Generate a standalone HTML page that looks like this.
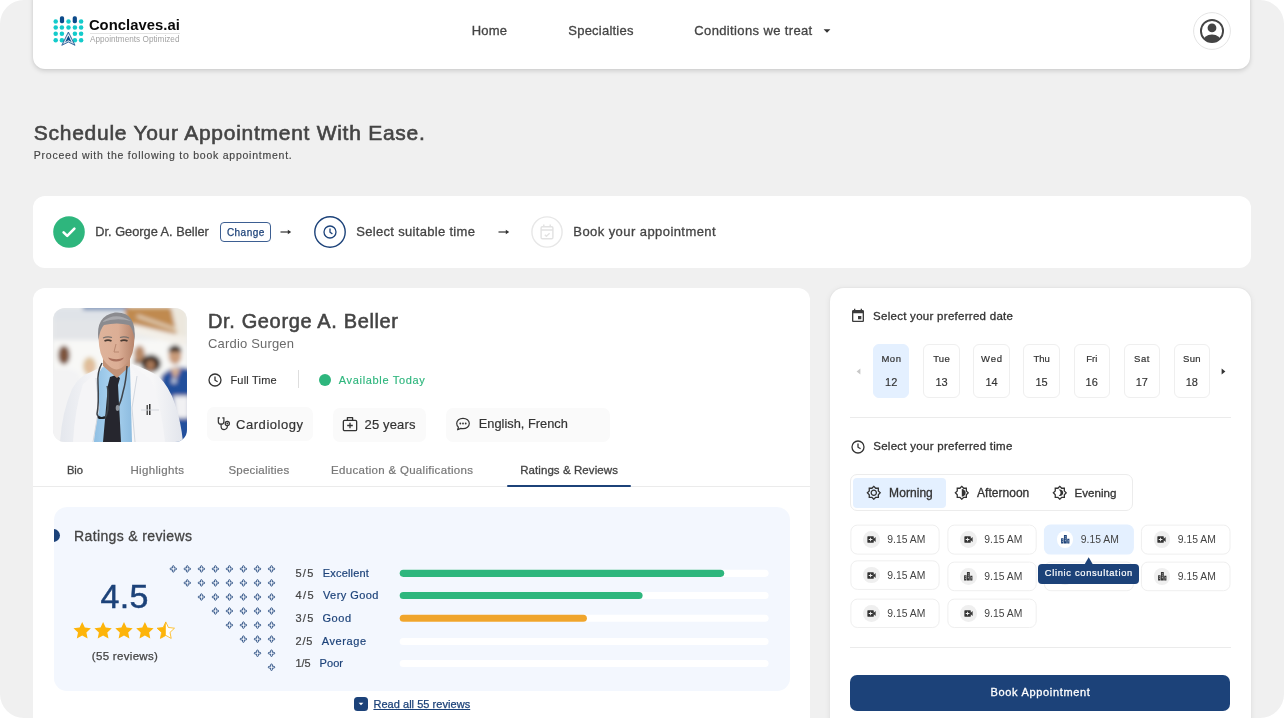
<!DOCTYPE html>
<html lang="en">
<head>
<meta charset="utf-8">
<title>Conclaves.ai - Schedule Your Appointment</title>
<style>
html,body{margin:0;padding:0;background:#fff;}
body{width:1284px;height:718px;overflow:hidden;font-family:"Liberation Sans",sans-serif;}
#page{will-change:transform;position:relative;width:1284px;height:718px;background:#f0f0f0;border-radius:24px;overflow:hidden;}
.abs,.t,.card,.slot,.day,svg.i{position:absolute;}
.t{white-space:pre;line-height:1em;}
.card{background:#fff;}
#nav{left:33.4px;top:-14px;width:1217px;height:83px;border-radius:12px;box-shadow:0 2px 5px rgba(0,0,0,.14),0 0 3px rgba(0,0,0,.05);}
#steps{left:33px;top:196.2px;width:1218px;height:71.6px;border-radius:12px;}
#doc{left:33px;top:288px;width:777px;height:460px;border-radius:12px;}
#book{left:830px;top:287.7px;width:421px;height:460px;border-radius:14px;box-shadow:0 0 0 1px #e6e6e6,0 1px 6px rgba(0,0,0,.08);}
.chip{position:absolute;top:407px;height:34.3px;background:#fafafa;border-radius:7px;}
.hr{position:absolute;height:1px;background:#ebebeb;}
#rbox{position:absolute;left:53.7px;top:506.6px;width:736px;height:184px;border-radius:13px;background:#f3f7fe;overflow:hidden;}
.track{position:absolute;left:400px;width:368px;height:6px;border-radius:3px;background:#fff;}
.track b{display:block;height:6px;border-radius:3px;}
.day{top:344.2px;width:36.4px;height:53.8px;border-radius:6px;box-sizing:border-box;border:1px solid #efefef;background:#fff;}
.day.on{background:#e4f0ff;border-color:#e4f0ff;}
.slot{width:89.4px;}
.slot i{position:absolute;left:12.8px;top:50%;margin-top:-8.3px;width:16.6px;height:16.6px;border-radius:50%;background:#efefef;color:#333;display:flex;align-items:center;justify-content:center;}
.slot.sel i{background:#fff;color:#1c4279;}
</style>
</head>
<body>
<div id="page">

<!-- ======= NAV ======= -->
<div class="card" id="nav"></div>
<svg class="i" style="left:50px;top:12px" width="40" height="38" viewBox="50 12 40 38">
  <g fill="#14cbcb">
    <circle cx="55.7" cy="21.5" r="2.25"/><circle cx="68.5" cy="21.5" r="2.25"/><circle cx="81.1" cy="21.5" r="2.25"/>
    <circle cx="55.7" cy="27.6" r="2.25"/><circle cx="61.9" cy="27.6" r="2.25"/><circle cx="68.5" cy="27.6" r="2.25"/><circle cx="74.9" cy="27.6" r="2.25"/><circle cx="81.1" cy="27.6" r="2.25"/>
    <circle cx="55.7" cy="33.8" r="2.25"/><circle cx="61.9" cy="33.8" r="2.25"/><circle cx="74.9" cy="33.8" r="2.25"/><circle cx="81.1" cy="33.8" r="2.25"/>
    <circle cx="55.7" cy="40.2" r="2.25"/><circle cx="61.9" cy="40.2" r="2.25"/><circle cx="74.9" cy="40.2" r="2.25"/><circle cx="81.1" cy="40.2" r="2.25"/>
  </g>
  <g fill="#0c4a8a">
    <rect x="59.900" y="16.200" width="4.200" height="7" rx="1.700"/><rect x="72.700" y="16.200" width="4.200" height="7" rx="1.700"/>
  </g>
  <path d="M68.400 32 L75 45.300 L68.400 42 L61.800 45.300 Z" fill="#fff" stroke="#0c4a8a" stroke-width=".8" stroke-linejoin="round"/><path d="M68.400 33.300 L73.600 43.900 L68.400 41.200 L63.200 43.900 Z" fill="none" stroke="#0c4a8a" stroke-width=".4" stroke-dasharray=".8 .6"/>
  <path d="M68.400 35.600 L71.700 42.200 L68.400 40.300 L65.100 42.200 Z" fill="#0c4a8a"/>
</svg>
<div class="abs" style="left:90px;top:32.6px;width:90px;height:1px;background:#e3e3e3"></div>
<svg class="i" style="left:822px;top:28px" width="10" height="6" viewBox="0 0 10 6"><path d="M1.6 1.2h6.8L5 4.8z" fill="#333"/></svg>
<!-- avatar -->
<svg class="i" style="left:1192px;top:11px" width="40" height="40" viewBox="-20 -20 40 40">
  <circle r="18.4" fill="#fff" stroke="#e4e4e4" stroke-width="1"/>
  <clipPath id="avc"><circle r="11"/></clipPath>
  <circle r="11.05" fill="#fff" stroke="#444" stroke-width="1.9"/>
  <circle cx="0" cy="-3.1" r="4.4" fill="#444"/>
  <ellipse cx="0" cy="11.2" rx="9.4" ry="7.6" fill="#444" clip-path="url(#avc)"/>
</svg>

<!-- ======= STEPS ======= -->
<div class="card" id="steps"></div>
<svg class="i" style="left:53px;top:216px" width="32" height="32" viewBox="0 0 32 32"><circle cx="16" cy="16" r="15.8" fill="#2eb67d"/><path d="M10.6 16.4l3.6 3.5 7.2-7.3" fill="none" stroke="#fff" stroke-width="2.6" stroke-linecap="round" stroke-linejoin="round"/></svg>
<div class="abs" style="left:220.2px;top:222.1px;width:51.3px;height:20.2px;box-sizing:border-box;border:1px solid #3d5f92;border-radius:4px"></div>
<svg class="i" style="left:280px;top:228px" width="12" height="8" viewBox="0 0 12 8"><path d="M.5 4h8.500" fill="none" stroke="#333" stroke-width="1.200"/><path d="M7.800 1.700 11.200 4 7.800 6.300z" fill="#333"/></svg>
<svg class="i" style="left:497.6px;top:228px" width="12" height="8" viewBox="0 0 12 8"><path d="M.5 4h8.500" fill="none" stroke="#333" stroke-width="1.200"/><path d="M7.800 1.700 11.200 4 7.800 6.300z" fill="#333"/></svg>
<svg class="i" style="left:313px;top:215px" width="34" height="34" viewBox="-17 -17 34 34"><circle r="15.2" fill="#fff" stroke="#1c4279" stroke-width="1.4"/><circle r="6" fill="none" stroke="#1c4279" stroke-width="1.3"/><path d="M0-3.400V.2L2.400 1.900" fill="none" stroke="#1c4279" stroke-width="1.300"/></svg>
<svg class="i" style="left:530.400px;top:215px" width="34" height="34" viewBox="-17 -17 34 34"><circle r="15.100" fill="#fff" stroke="#e7e7e7" stroke-width="1.400"/><g fill="none" stroke="#e2e2e2" stroke-width="1.400"><rect x="-5.900" y="-5.300" width="11.800" height="12" rx="1.200"/><path d="M-5.900-2H5.900M-3.200-7.400v2.400M3.200-7.400v2.400M-2.200 2.700l1.600 1.500L2.600 1.300"/></g></svg>

<!-- ======= DOCTOR CARD ======= -->
<div class="card" id="doc"></div>
<!--PHOTO_START-->
<svg class="i" style="left:53.400px;top:307.700px" width="134" height="134" viewBox="0 0 134 134">
  <defs>
    <clipPath id="pc"><rect width="134" height="134" rx="12"/></clipPath>
    <filter id="b3" x="-20%" y="-20%" width="140%" height="140%"><feGaussianBlur stdDeviation="2"/></filter>
    <filter id="b1" x="-20%" y="-20%" width="140%" height="140%"><feGaussianBlur stdDeviation=".700"/></filter>
    <linearGradient id="coat" x1="0" x2="1"><stop offset="0" stop-color="#e4e7ed"/><stop offset=".3" stop-color="#f6f6f8"/><stop offset=".75" stop-color="#f7f7f8"/><stop offset="1" stop-color="#e2e5ec"/></linearGradient>
    <linearGradient id="face" x1="0" x2="1"><stop offset="0" stop-color="#deb39b"/><stop offset=".55" stop-color="#dcae95"/><stop offset="1" stop-color="#b6846b"/></linearGradient>
    <linearGradient id="shirt" x1="0" x2="1"><stop offset="0" stop-color="#8fbfe3"/><stop offset=".5" stop-color="#abd3f0"/><stop offset="1" stop-color="#8dbce0"/></linearGradient>
  </defs>
  <g clip-path="url(#pc)">
    <rect width="134" height="134" fill="#eceded"/>
    <g filter="url(#b3)">
      <rect x="0" y="0" width="80" height="12" fill="#dfe3e8"/>
      <rect x="30" y="-2" width="45" height="4" fill="#5d7fae"/>
      <rect x="0" y="12" width="75" height="20" fill="#e3e5e8"/>
      <rect x="0" y="32" width="134" height="40" fill="#f8f8f6"/>
      <path d="M72 0h50l8 27-28-4-30-8z" fill="#c08a50"/>
      <path d="M118 0h16v30l-10-3z" fill="#ece7dd"/>
      <path d="M80 16l54 13v9l-54-13z" fill="#f3efe8"/><path d="M84 8l40 14" stroke="#e9dcc6" stroke-width="2.500"/>
      
      <!-- left person -->
      <ellipse cx="11" cy="47" rx="6" ry="9.500" fill="#7d543d"/>
      <path d="M-4 64Q11 55 27 66V134H-4z" fill="#f3f3f4"/>
      <!-- blonde -->
      <ellipse cx="36.500" cy="58" rx="6.500" ry="9" fill="#dcc095"/>
      <ellipse cx="37" cy="59" rx="3.500" ry="5" fill="#e3bb9e"/>
      <!-- bearded man -->
      <ellipse cx="86.500" cy="46" rx="5.500" ry="8.500" fill="#b88a68"/>
      <path d="M81 50q5 8 11 0v6h-11z" fill="#6d4c38"/>
      <!-- curly hair woman -->
      <ellipse cx="98" cy="55.500" rx="10" ry="9" fill="#382923"/>
      <ellipse cx="97.500" cy="57.500" rx="4.500" ry="5.500" fill="#a87859"/>
      <!-- scrubs man -->
      <ellipse cx="122" cy="47" rx="6.500" ry="9.500" fill="#c99b7a"/>
      <path d="M115.500 41q6.500-8 13 0v3h-13z" fill="#3a2a21"/>
      <path d="M108 68Q122 54 138 62V134H114z" fill="#224f9c"/>
      <path d="M117 60l5 12 6-12z" fill="#d9b092"/>
      <path d="M120 88h16v22h-14z" fill="#f1f1f3"/>
      <circle cx="121" cy="73" r="2.500" fill="#c9d3e4"/>
    </g>
    <!-- main doctor -->
    <g filter="url(#b1)">
      <path d="M7 134Q9 104 19 81Q26 68 38 64L50 58 64 72 79 56Q96 62 105 68Q116 78 122 96Q128 114 130 134z" fill="url(#coat)"/>
      <path d="M46 60Q62 56 77 58L79 134H41z" fill="url(#shirt)"/>
      <path d="M50 58L43 70 46 100 40 134H20Q22 100 30 76zM77 56L84 68 79 100 82 134H112Q108 96 98 72z" fill="#f5f5f7"/>
      <path d="M43 70l3 30-6 34M84 68l-5 32 3 34" fill="none" stroke="#d3d8e0" stroke-width="1"/>
      <path d="M57 69l6-2 4 3-2 7 3 57H50l5-57z" fill="#26282d"/>
      <!-- neck + head -->
      <path d="M50 48h27v10l-13 12L50 58z" fill="#c39378"/>
      <path d="M45.500 30Q45 12 63.500 11Q82 12 81.500 30Q81 48 74 55Q68 61.500 63.500 61.500Q59 61.500 53 55Q46 48 45.500 30z" fill="url(#face)"/>
      <path d="M45.500 32Q42 8 62 4.500Q84 3 81.500 32Q80 20 76 17Q64 14 51 17Q47 21 45.500 32z" fill="#8b8b8f"/>
      <path d="M49 14Q62 3 78 13Q64 9 49 14z" fill="#a9a9ad"/>
      <path d="M55 49.500q8.500 3.500 16 0-2 4-8 4t-8-4z" fill="#a9705c"/>
      <path d="M51.500 33q3.500-1.800 7 0M67.500 33q3.500-1.800 7 0" fill="none" stroke="#4a3a33" stroke-width="1.700"/>
      <path d="M50 30q4.500-2 9-.5M67 29.500q4.500-1.500 9 .5" fill="none" stroke="#77706c" stroke-width="1.200"/>
      <path d="M63 36l-2 8h5" fill="none" stroke="#b98870" stroke-width="1"/>
      <!-- tubes -->
      <path d="M49 55Q44 64 45 76Q46 96 44 106Q45 111 52 110Q56 104 55 88Q55 80 54 78M74 58Q73 74 70 84Q68 94 65 99" fill="none" stroke="#3f444b" stroke-width="1.500"/>
      <path d="M45 109q3 2 7 0" fill="none" stroke="#1f2226" stroke-width="2.200"/>
      <ellipse cx="64.500" cy="100" rx="1.800" ry="3" fill="#8e949c"/>
      <rect x="93.500" y="97" width="1.500" height="10" fill="#555"/><rect x="96" y="96" width="1.500" height="11" fill="#333"/>
      <path d="M88 102h18" stroke="#d5d8de" stroke-width="1"/>
    </g>
  </g>
</svg>
<!--PHOTO_END-->
<svg class="i" style="left:208px;top:373px" width="14" height="14" viewBox="-7 -7 14 14"><circle r="6" fill="none" stroke="#333" stroke-width="1.300"/><path d="M0-3.600V.2L2.600 1.800" fill="none" stroke="#333" stroke-width="1.300"/></svg>
<div class="abs" style="left:298px;top:369.800px;width:1px;height:18.700px;background:#dedede"></div>
<div class="abs" style="left:318.900px;top:373.600px;width:12.200px;height:12.200px;border-radius:50%;background:#2eb67d"></div>
<div class="chip" style="left:207px;width:105.500px"></div>
<div class="chip" style="left:333.100px;width:92.500px;top:408px"></div>
<div class="chip" style="left:446.200px;width:163.500px;top:408px"></div>
<!-- steth icon -->
<svg class="i" style="left:215.500px;top:416px" width="16" height="16" viewBox="0 0 16 16"><g fill="none" stroke="#333" stroke-width="1.200" stroke-linecap="round"><path d="M3.400 1.900H2.300v3.500a2.800 2.800 0 0 0 5.600 0V1.900H6.800"/><path d="M5.100 8.200v2.300a3.100 3.100 0 0 0 6.200 0V9.700"/><circle cx="11.300" cy="7.500" r="2.100"/></g><circle cx="11.300" cy="7.500" r=".9" fill="#333"/></svg>
<!-- first aid -->
<svg class="i" style="left:342.300px;top:416.300px" width="16" height="16" viewBox="0 0 16 16"><g fill="none" stroke="#333" stroke-width="1.300" stroke-linejoin="round"><rect x="1.350" y="4.300" width="13.300" height="10.400" rx="1.300"/><path d="M5.400 4.300V1.700h5.200V4.300M8 6.700v5.600M5.200 9.500h5.600"/></g></svg>
<!-- chat -->
<svg class="i" style="left:455px;top:416px" width="16" height="16" viewBox="0 0 16 16"><path d="M8 2.300c3.500 0 6.300 2.300 6.300 5.200S11.500 12.700 8 12.700c-.8 0-1.500-.100-2.200-.300L2.600 13.800l.8-2.700C2.400 10.200 1.700 8.900 1.700 7.500 1.700 4.600 4.500 2.300 8 2.300z" fill="none" stroke="#333" stroke-width="1.200" stroke-linejoin="round"/><g fill="#333"><circle cx="5.300" cy="7.500" r=".9"/><circle cx="8" cy="7.500" r=".9"/><circle cx="10.700" cy="7.500" r=".9"/></g></svg>
<div class="hr" style="left:33px;top:486px;width:777px;"></div>
<div class="abs" style="left:506.900px;top:484.700px;width:124px;height:2.200px;background:#1c4279;border-radius:1px"></div>

<!-- ratings -->
<div id="rbox"><div class="abs" style="left:-6.600px;top:22.700px;width:13.200px;height:13.200px;border-radius:50%;background:#1c4279"></div></div>
<svg class="i" style="left:0;top:0" width="1284" height="718" viewBox="0 0 1284 718">
  <defs>
    <g id="pl" transform="translate(.45 .45) scale(.89)"><path d="M3 1.300Q3 .4 4 .4Q5 .4 5 1.300V3H6.700Q7.600 3 7.600 4Q7.600 5 6.700 5H5V6.700Q5 7.600 4 7.600Q3 7.600 3 6.700V5H1.300Q.4 5 .4 4Q.4 3 1.300 3H3Z" fill="none" stroke="#1c4279" stroke-width=".95"/></g>
    <path id="st" d="M9 .6l2.600 5.600 6.100.7-4.500 4.200 1.200 6L9 14.100 3.600 17.100l1.200-6L.3 6.900l6.100-.7z"/>
    <clipPath id="hl"><rect x="0" y="0" width="9" height="18"/></clipPath>
  </defs>
  <use href="#pl" x="169.3" y="564.9"/><use href="#pl" x="183.3" y="564.9"/><use href="#pl" x="197.4" y="564.9"/><use href="#pl" x="211.4" y="564.9"/><use href="#pl" x="225.4" y="564.9"/><use href="#pl" x="239.4" y="564.9"/><use href="#pl" x="253.5" y="564.9"/><use href="#pl" x="267.5" y="564.9"/><use href="#pl" x="183.3" y="578.9"/><use href="#pl" x="197.4" y="578.9"/><use href="#pl" x="211.4" y="578.9"/><use href="#pl" x="225.4" y="578.9"/><use href="#pl" x="239.4" y="578.9"/><use href="#pl" x="253.5" y="578.9"/><use href="#pl" x="267.5" y="578.9"/><use href="#pl" x="197.4" y="593.0"/><use href="#pl" x="211.4" y="593.0"/><use href="#pl" x="225.4" y="593.0"/><use href="#pl" x="239.4" y="593.0"/><use href="#pl" x="253.5" y="593.0"/><use href="#pl" x="267.5" y="593.0"/><use href="#pl" x="211.4" y="607.0"/><use href="#pl" x="225.4" y="607.0"/><use href="#pl" x="239.4" y="607.0"/><use href="#pl" x="253.5" y="607.0"/><use href="#pl" x="267.5" y="607.0"/><use href="#pl" x="225.4" y="621.1"/><use href="#pl" x="239.4" y="621.1"/><use href="#pl" x="253.5" y="621.1"/><use href="#pl" x="267.5" y="621.1"/><use href="#pl" x="239.4" y="635.1"/><use href="#pl" x="253.5" y="635.1"/><use href="#pl" x="267.5" y="635.1"/><use href="#pl" x="253.5" y="649.2"/><use href="#pl" x="267.5" y="649.2"/><use href="#pl" x="267.5" y="663.2"/>
  <g fill="#fdb40a">
    <use href="#st" x="73.200" y="621.300"/><use href="#st" x="94.100" y="621.300"/><use href="#st" x="115" y="621.300"/><use href="#st" x="135.900" y="621.300"/>
  </g>
  <g transform="translate(156.800 621.300)"><use href="#st" fill="#fff" stroke="#fdb40a" stroke-width=".8"/><use href="#st" fill="#fdb40a" clip-path="url(#hl)"/></g>
</svg>
<svg class="i" style="left:0;top:0" width="1284" height="718"><rect x="399.700" y="569.8" width="368.900" height="7.100" rx="3.550" fill="#fff"/><rect x="399.700" y="569.8" width="324.5" height="7.100" rx="3.550" fill="#2eb67d"/><rect x="399.700" y="591.9" width="368.900" height="7.100" rx="3.550" fill="#fff"/><rect x="399.700" y="591.9" width="242.9" height="7.100" rx="3.550" fill="#2eb67d"/><rect x="399.700" y="614.7" width="368.900" height="7.100" rx="3.550" fill="#fff"/><rect x="399.700" y="614.7" width="187.2" height="7.100" rx="3.550" fill="#f0a52c"/><rect x="399.700" y="638.0" width="368.900" height="7.100" rx="3.550" fill="#fff"/><rect x="399.700" y="659.9" width="368.900" height="7.100" rx="3.550" fill="#fff"/></svg>
<div class="abs" style="left:353.700px;top:697.100px;width:14px;height:13.800px;border-radius:3.500px;background:#1c4279"></div>
<svg class="i" style="left:357.700px;top:702.300px" width="6" height="4" viewBox="0 0 6 4"><path d="M.6.700h4.800L3 3.300z" fill="#fff"/></svg>

<!-- ======= BOOKING CARD ======= -->
<div class="card" id="book"></div>
<svg class="i" style="left:850px;top:307.500px" width="16" height="16" viewBox="0 0 24 24"><path fill="#3c3c3c" d="M17 12h-5v5h5v-5zM16 1v2H8V1H6v2H5c-1.110 0-1.990.9-1.990 2L3 19c0 1.100.890 2 2 2h14c1.100 0 2-.9 2-2V5c0-1.100-.9-2-2-2h-1V1h-2zm3 18H5V8h14v11z"/></svg>
<svg class="i" style="left:855.600px;top:367.800px" width="5" height="7" viewBox="0 0 5 7"><path d="M4.400.5v6L.6 3.500z" fill="#c8c8c8"/></svg>
<svg class="i" style="left:1220.600px;top:368.200px" width="5" height="7" viewBox="0 0 5 7"><path d="M.6.400v6.200l3.800-3.100z" fill="#333"/></svg>
<div class="day on" style="left:873.0px"></div>
<div class="day" style="left:923.3px"></div>
<div class="day" style="left:973.3px"></div>
<div class="day" style="left:1023.4px"></div>
<div class="day" style="left:1073.5px"></div>
<div class="day" style="left:1123.6px"></div>
<div class="day" style="left:1173.6px"></div>
<div class="hr" style="left:850.400px;top:417.200px;width:380.500px;"></div>
<svg class="i" style="left:850.900px;top:439.600px" width="14" height="14" viewBox="-7 -7 14 14"><circle r="6" fill="none" stroke="#333" stroke-width="1.300"/><path d="M0-3.600V.2L2.600 1.800" fill="none" stroke="#333" stroke-width="1.300"/></svg>
<div class="abs" style="left:850px;top:473.900px;width:283.200px;height:36.700px;box-sizing:border-box;border:1px solid #ececec;border-radius:7px"></div>
<div class="abs" style="left:853.200px;top:477.900px;width:92.400px;height:29.700px;border-radius:4px;background:#e4f0ff"></div>
<svg class="i" style="left:866.400px;top:484.800px" width="15.600" height="15.600" viewBox="0 0 24 24"><path fill="#333" d="M20 8.690V4h-4.690L12 .690 8.690 4H4v4.690L.690 12 4 15.310V20h4.690L12 23.310 15.310 20H20v-4.690L23.310 12 20 8.690zm-2 5.790V18h-3.520L12 20.480 9.520 18H6v-3.520L3.520 12 6 9.520V6h3.520L12 3.520 14.480 6H18v3.520L20.480 12 18 14.480zM12 7c-2.760 0-5 2.240-5 5s2.240 5 5 5 5-2.240 5-5-2.240-5-5-5zm0 8c-1.650 0-3-1.350-3-3s1.350-3 3-3 3 1.350 3 3-1.350 3-3 3z"/></svg>
<svg class="i" style="left:953.900px;top:484.800px" width="15.600" height="15.600" viewBox="0 0 24 24"><path fill="#333" d="M20 8.690V4h-4.690L12 .690 8.690 4H4v4.690L.690 12 4 15.310V20h4.690L12 23.310 15.310 20H20v-4.690L23.310 12 20 8.690zm-2 5.790V18h-3.520L12 20.480 9.520 18H6v-3.520L3.520 12 6 9.520V6h3.520L12 3.520 14.480 6H18v3.520L20.480 12 18 14.480zM12 6v12c3.310 0 6-2.690 6-6s-2.690-6-6-6z"/></svg>
<svg class="i" style="left:1051.500px;top:484.800px" width="15.600" height="15.600" viewBox="0 0 24 24"><path fill="#333" d="M20 8.690V4h-4.690L12 .690 8.690 4H4v4.690L.690 12 4 15.310V20h4.690L12 23.310 15.310 20H20v-4.690L23.310 12 20 8.690zm-2 5.790V18h-3.520L12 20.480 9.520 18H6v-3.520L3.520 12 6 9.520V6h3.520L12 3.520 14.480 6H18v3.520L20.480 12 18 14.480zM12.290 7c-.74 0-1.450.170-2.080.460 1.720.790 2.920 2.530 2.920 4.540s-1.200 3.750-2.920 4.540c.630.290 1.340.460 2.080.460 2.760 0 5-2.240 5-5s-2.240-5-5-5z"/></svg>
<svg class="i" style="left:0;top:0" width="1284" height="718"><rect x="850.9" y="525.1" width="88.2" height="29" rx="6.500" fill="#fff" stroke="#efefef"/></svg><div class="slot" style="left:850.4px;top:524.6px;height:30px"><i><svg viewBox="0 0 24 24" width="11" height="11"><path fill="currentColor" d="M17 10.5V6a1 1 0 0 0-1-1H4a1 1 0 0 0-1 1v12a1 1 0 0 0 1 1h12a1 1 0 0 0 1-1v-4.500l4 4v-11zM14 13h-3v3H9v-3H6v-2h3V8h2v3h3z"/></svg></i></div>
<svg class="i" style="left:0;top:0" width="1284" height="718"><rect x="947.9" y="525.1" width="88.3" height="29" rx="6.500" fill="#fff" stroke="#efefef"/></svg><div class="slot" style="left:947.4px;top:524.6px;height:30px"><i><svg viewBox="0 0 24 24" width="11" height="11"><path fill="currentColor" d="M17 10.5V6a1 1 0 0 0-1-1H4a1 1 0 0 0-1 1v12a1 1 0 0 0 1 1h12a1 1 0 0 0 1-1v-4.500l4 4v-11zM14 13h-3v3H9v-3H6v-2h3V8h2v3h3z"/></svg></i></div>
<svg class="i" style="left:0;top:0" width="1284" height="718"><rect x="1043.9" y="524.6" width="90.0" height="30" rx="6.500" fill="#e4f0ff"/></svg><div class="slot sel" style="left:1043.9px;top:524.6px;height:30px"><i><svg viewBox="0 0 24 24" width="10.5" height="10.5"><path fill="currentColor" d="M2.500 21.500V9.500h5.500v12zM9 21.500V2.500h6.500v19zM16.500 21.500V11h5v10.500z"/><path fill="#fff" fill-opacity=".75" d="M4.500 12h1.500v2h-1.500zM4.500 16h1.500v2h-1.500zM11 5.500h2.500v2H11zM11 10h2.500v2H11zM11 14.500h2.500v2H11zM18.200 13.500h1.600v2h-1.600zM18.200 17h1.600v2h-1.600z"/></svg></i></div>
<svg class="i" style="left:0;top:0" width="1284" height="718"><rect x="1141.4" y="525.1" width="88.6" height="29" rx="6.500" fill="#fff" stroke="#efefef"/></svg><div class="slot" style="left:1140.9px;top:524.6px;height:30px"><i><svg viewBox="0 0 24 24" width="11" height="11"><path fill="currentColor" d="M17 10.5V6a1 1 0 0 0-1-1H4a1 1 0 0 0-1 1v12a1 1 0 0 0 1 1h12a1 1 0 0 0 1-1v-4.500l4 4v-11zM14 13h-3v3H9v-3H6v-2h3V8h2v3h3z"/></svg></i></div>
<svg class="i" style="left:0;top:0" width="1284" height="718"><rect x="850.9" y="560.8" width="88.2" height="28.6" rx="6.500" fill="#fff" stroke="#efefef"/></svg><div class="slot" style="left:850.4px;top:560.3px;height:29.6px"><i><svg viewBox="0 0 24 24" width="11" height="11"><path fill="currentColor" d="M17 10.5V6a1 1 0 0 0-1-1H4a1 1 0 0 0-1 1v12a1 1 0 0 0 1 1h12a1 1 0 0 0 1-1v-4.500l4 4v-11zM14 13h-3v3H9v-3H6v-2h3V8h2v3h3z"/></svg></i></div>
<svg class="i" style="left:0;top:0" width="1284" height="718"><rect x="947.9" y="562.1" width="88.3" height="28.6" rx="6.500" fill="#fff" stroke="#efefef"/></svg><div class="slot" style="left:947.4px;top:561.6px;height:29.6px"><i><svg viewBox="0 0 24 24" width="10.5" height="10.5"><path fill="currentColor" d="M2.500 21.500V9.500h5.500v12zM9 21.500V2.500h6.500v19zM16.500 21.500V11h5v10.500z"/><path fill="#fff" fill-opacity=".75" d="M4.500 12h1.500v2h-1.500zM4.500 16h1.500v2h-1.500zM11 5.500h2.500v2H11zM11 10h2.500v2H11zM11 14.500h2.500v2H11zM18.200 13.500h1.600v2h-1.600zM18.200 17h1.600v2h-1.600z"/></svg></i></div>
<svg class="i" style="left:0;top:0" width="1284" height="718"><rect x="1044.4" y="562.1" width="89.0" height="28.6" rx="6.500" fill="#fff" stroke="#efefef"/></svg><div class="slot" style="left:1043.9px;top:561.6px;height:29.6px"><i><svg viewBox="0 0 24 24" width="10.5" height="10.5"><path fill="currentColor" d="M2.500 21.500V9.500h5.500v12zM9 21.500V2.500h6.500v19zM16.500 21.500V11h5v10.500z"/><path fill="#fff" fill-opacity=".75" d="M4.500 12h1.500v2h-1.500zM4.500 16h1.500v2h-1.500zM11 5.500h2.500v2H11zM11 10h2.500v2H11zM11 14.500h2.500v2H11zM18.200 13.500h1.600v2h-1.600zM18.200 17h1.600v2h-1.600z"/></svg></i></div>
<svg class="i" style="left:0;top:0" width="1284" height="718"><rect x="1141.4" y="562.1" width="88.6" height="28.6" rx="6.500" fill="#fff" stroke="#efefef"/></svg><div class="slot" style="left:1140.9px;top:561.6px;height:29.6px"><i><svg viewBox="0 0 24 24" width="10.5" height="10.5"><path fill="currentColor" d="M2.500 21.500V9.500h5.500v12zM9 21.500V2.500h6.500v19zM16.500 21.500V11h5v10.500z"/><path fill="#fff" fill-opacity=".75" d="M4.500 12h1.500v2h-1.500zM4.500 16h1.500v2h-1.500zM11 5.500h2.500v2H11zM11 10h2.500v2H11zM11 14.500h2.500v2H11zM18.200 13.500h1.600v2h-1.600zM18.200 17h1.600v2h-1.600z"/></svg></i></div>
<svg class="i" style="left:0;top:0" width="1284" height="718"><rect x="850.9" y="599.1" width="88.2" height="28.4" rx="6.500" fill="#fff" stroke="#efefef"/></svg><div class="slot" style="left:850.4px;top:598.6px;height:29.4px"><i><svg viewBox="0 0 24 24" width="11" height="11"><path fill="currentColor" d="M17 10.5V6a1 1 0 0 0-1-1H4a1 1 0 0 0-1 1v12a1 1 0 0 0 1 1h12a1 1 0 0 0 1-1v-4.500l4 4v-11zM14 13h-3v3H9v-3H6v-2h3V8h2v3h3z"/></svg></i></div>
<svg class="i" style="left:0;top:0" width="1284" height="718"><rect x="947.9" y="599.1" width="88.3" height="28.4" rx="6.500" fill="#fff" stroke="#efefef"/></svg><div class="slot" style="left:947.4px;top:598.6px;height:29.4px"><i><svg viewBox="0 0 24 24" width="11" height="11"><path fill="currentColor" d="M17 10.5V6a1 1 0 0 0-1-1H4a1 1 0 0 0-1 1v12a1 1 0 0 0 1 1h12a1 1 0 0 0 1-1v-4.500l4 4v-11zM14 13h-3v3H9v-3H6v-2h3V8h2v3h3z"/></svg></i></div>
<!-- tooltip -->
<div class="abs" style="left:1038px;top:563.700px;width:101.300px;height:20px;border-radius:4px;background:#1c4279"></div>
<svg class="i" style="left:1084px;top:556.600px" width="10" height="8" viewBox="0 0 10 8"><path d="M4.700.2L8.900 7.400H.5z" fill="#1c4279"/></svg>
<div class="hr" style="left:850.400px;top:647.200px;width:380.500px;"></div>
<div class="abs" style="left:850.200px;top:674.600px;width:380.100px;height:36.400px;border-radius:7px;background:#1c4279"></div>

<span class="t" style="left:88.9px;top:17.9px;font-size:14.8px;color:#0a0a0a;letter-spacing:0.047px;font-weight:700;">Conclaves.ai</span>
<span class="t" style="left:90.0px;top:36.1px;font-size:8.2px;color:#a2a2a2;letter-spacing:0.014px;">Appointments Optimized</span>
<span class="t" style="left:471.8px;top:24.2px;font-size:13px;color:#444;letter-spacing:0.171px;-webkit-text-stroke:0.3px #444;">Home</span>
<span class="t" style="left:568.3px;top:24.2px;font-size:13px;color:#444;letter-spacing:0.222px;-webkit-text-stroke:0.3px #444;">Specialties</span>
<span class="t" style="left:694.3px;top:24.2px;font-size:13px;color:#444;letter-spacing:0.368px;-webkit-text-stroke:0.3px #444;">Conditions we treat</span>
<span class="t" style="left:33.8px;top:122.4px;font-size:21px;color:#444;letter-spacing:0.731px;-webkit-text-stroke:0.6px #444;">Schedule Your Appointment With Ease.</span>
<span class="t" style="left:33.8px;top:150.3px;font-size:10.5px;color:#444;letter-spacing:0.761px;-webkit-text-stroke:0.15px #444;">Proceed with the following to book appointment.</span>
<span class="t" style="left:95.3px;top:225.8px;font-size:12.77px;color:#444;letter-spacing:0.000px;-webkit-text-stroke:0.3px #444;">Dr. George A. Beller</span>
<span class="t" style="left:226.9px;top:227.6px;font-size:10px;color:#1c4279;letter-spacing:0.474px;-webkit-text-stroke:0.25px #1c4279;">Change</span>
<span class="t" style="left:356.3px;top:225.4px;font-size:13px;color:#444;letter-spacing:0.309px;-webkit-text-stroke:0.3px #444;">Select suitable time</span>
<span class="t" style="left:573.3px;top:225.4px;font-size:13px;color:#444;letter-spacing:0.430px;-webkit-text-stroke:0.3px #444;">Book your appointment</span>
<span class="t" style="left:208.0px;top:310.8px;font-size:20px;color:#444;letter-spacing:0.638px;-webkit-text-stroke:0.55px #444;">Dr. George A. Beller</span>
<span class="t" style="left:208.0px;top:337.1px;font-size:13px;color:#6b6b6b;letter-spacing:0.181px;">Cardio Surgen</span>
<span class="t" style="left:230.4px;top:374.8px;font-size:11px;color:#333;letter-spacing:0.209px;-webkit-text-stroke:0.15px #333;">Full Time</span>
<span class="t" style="left:338.8px;top:374.8px;font-size:11px;color:#2eb67d;letter-spacing:0.667px;-webkit-text-stroke:0.15px #2eb67d;">Available Today</span>
<span class="t" style="left:236.1px;top:418.3px;font-size:13px;color:#333;letter-spacing:0.527px;-webkit-text-stroke:0.18px #333;">Cardiology</span>
<span class="t" style="left:364.6px;top:418.3px;font-size:13px;color:#333;letter-spacing:0.132px;-webkit-text-stroke:0.18px #333;">25 years</span>
<span class="t" style="left:478.8px;top:417.9px;font-size:12.82px;color:#333;letter-spacing:0.000px;-webkit-text-stroke:0.18px #333;">English, French</span>
<span class="t" style="left:66.9px;top:464.9px;font-size:11.21px;color:#444;letter-spacing:0.000px;-webkit-text-stroke:0.3px #444;">Bio</span>
<span class="t" style="left:130.4px;top:464.7px;font-size:11.5px;color:#777;letter-spacing:0.344px;-webkit-text-stroke:0.2px #777;">Highlights</span>
<span class="t" style="left:228.4px;top:464.7px;font-size:11.5px;color:#777;letter-spacing:0.239px;-webkit-text-stroke:0.2px #777;">Specialities</span>
<span class="t" style="left:331.0px;top:464.7px;font-size:11.5px;color:#777;letter-spacing:0.306px;-webkit-text-stroke:0.2px #777;">Education &amp; Qualifications</span>
<span class="t" style="left:520.2px;top:464.7px;font-size:11.5px;color:#444;letter-spacing:0.074px;-webkit-text-stroke:0.3px #444;">Ratings &amp; Reviews</span>
<span class="t" style="left:74.0px;top:529.0px;font-size:14px;color:#444;letter-spacing:0.372px;-webkit-text-stroke:0.3px #444;">Ratings &amp; reviews</span>
<span class="t" style="left:100.5px;top:579.2px;font-size:34px;color:#1c4279;letter-spacing:0.317px;-webkit-text-stroke:0.5px #1c4279;">4.5</span>
<span class="t" style="left:91.8px;top:650.5px;font-size:11.5px;color:#444;letter-spacing:0.314px;-webkit-text-stroke:0.25px #444;">(55 reviews)</span>
<span class="t" style="left:295.4px;top:567.5px;font-size:11px;color:#444;letter-spacing:1.352px;-webkit-text-stroke:0.2px #444;">5/5</span>
<span class="t" style="left:322.8px;top:567.5px;font-size:11px;color:#1c4279;letter-spacing:0.182px;-webkit-text-stroke:0.2px #1c4279;">Excellent</span>
<span class="t" style="left:295.4px;top:590.3px;font-size:11px;color:#444;letter-spacing:1.502px;-webkit-text-stroke:0.2px #444;">4/5</span>
<span class="t" style="left:322.9px;top:590.3px;font-size:11px;color:#1c4279;letter-spacing:0.452px;-webkit-text-stroke:0.2px #1c4279;">Very Good</span>
<span class="t" style="left:295.4px;top:612.7px;font-size:11px;color:#444;letter-spacing:1.302px;-webkit-text-stroke:0.2px #444;">3/5</span>
<span class="t" style="left:322.4px;top:612.7px;font-size:11px;color:#1c4279;letter-spacing:0.593px;-webkit-text-stroke:0.2px #1c4279;">Good</span>
<span class="t" style="left:295.4px;top:635.7px;font-size:11px;color:#444;letter-spacing:0.902px;-webkit-text-stroke:0.2px #444;">2/5</span>
<span class="t" style="left:321.7px;top:635.7px;font-size:11px;color:#1c4279;letter-spacing:0.603px;-webkit-text-stroke:0.2px #1c4279;">Average</span>
<span class="t" style="left:295.4px;top:658.3px;font-size:10.93px;color:#444;letter-spacing:0.000px;-webkit-text-stroke:0.2px #444;">1/5</span>
<span class="t" style="left:319.6px;top:658.3px;font-size:11px;color:#1c4279;letter-spacing:0.050px;-webkit-text-stroke:0.2px #1c4279;">Poor</span>
<span class="t" style="left:373.4px;top:698.8px;font-size:11px;color:#1c4279;letter-spacing:0.044px;-webkit-text-stroke:0.25px #1c4279;text-decoration:underline;text-underline-offset:1px;">Read all 55 reviews</span>
<span class="t" style="left:873.0px;top:310.6px;font-size:11.5px;color:#333;letter-spacing:0.281px;-webkit-text-stroke:0.3px #333;">Select your preferred date</span>
<span class="t" style="left:873.2px;top:440.9px;font-size:11.5px;color:#333;letter-spacing:0.275px;-webkit-text-stroke:0.3px #333;">Select your preferred time</span>
<span class="t" style="left:881.4px;top:353.7px;font-size:9.5px;color:#333;letter-spacing:0.558px;-webkit-text-stroke:0.2px #333;">Mon</span>
<span class="t" style="left:885.1px;top:376.9px;font-size:11px;color:#333;letter-spacing:0.000px;-webkit-text-stroke:0.15px #333;">12</span>
<span class="t" style="left:933.2px;top:354.1px;font-size:9.5px;color:#333;letter-spacing:0.234px;-webkit-text-stroke:0.2px #333;">Tue</span>
<span class="t" style="left:935.4px;top:376.9px;font-size:11px;color:#333;letter-spacing:0.000px;-webkit-text-stroke:0.15px #333;">13</span>
<span class="t" style="left:981.0px;top:354.1px;font-size:9.5px;color:#333;letter-spacing:0.863px;-webkit-text-stroke:0.2px #333;">Wed</span>
<span class="t" style="left:985.4px;top:376.9px;font-size:11px;color:#333;letter-spacing:0.000px;-webkit-text-stroke:0.15px #333;">14</span>
<span class="t" style="left:1033.4px;top:354.1px;font-size:9.5px;color:#333;letter-spacing:0.012px;-webkit-text-stroke:0.2px #333;">Thu</span>
<span class="t" style="left:1035.5px;top:376.9px;font-size:11px;color:#333;letter-spacing:0.000px;-webkit-text-stroke:0.15px #333;">15</span>
<span class="t" style="left:1086.2px;top:354.1px;font-size:9.5px;color:#333;letter-spacing:0.000px;-webkit-text-stroke:0.2px #333;">Fri</span>
<span class="t" style="left:1085.6px;top:376.9px;font-size:11px;color:#333;letter-spacing:0.000px;-webkit-text-stroke:0.15px #333;">16</span>
<span class="t" style="left:1134.1px;top:354.1px;font-size:9.5px;color:#333;letter-spacing:0.517px;-webkit-text-stroke:0.2px #333;">Sat</span>
<span class="t" style="left:1135.7px;top:376.9px;font-size:11px;color:#333;letter-spacing:0.000px;-webkit-text-stroke:0.15px #333;">17</span>
<span class="t" style="left:1183.1px;top:354.1px;font-size:9.5px;color:#333;letter-spacing:0.247px;-webkit-text-stroke:0.2px #333;">Sun</span>
<span class="t" style="left:1185.7px;top:376.9px;font-size:11px;color:#333;letter-spacing:0.000px;-webkit-text-stroke:0.15px #333;">18</span>
<span class="t" style="left:889.1px;top:486.9px;font-size:12px;color:#333;letter-spacing:0.057px;-webkit-text-stroke:0.3px #333;">Morning</span>
<span class="t" style="left:977.1px;top:487.1px;font-size:12px;color:#333;letter-spacing:0.019px;-webkit-text-stroke:0.3px #333;">Afternoon</span>
<span class="t" style="left:1074.6px;top:487.5px;font-size:11.56px;color:#333;letter-spacing:0.000px;-webkit-text-stroke:0.3px #333;">Evening</span>
<span class="t" style="left:1044.8px;top:569.1px;font-size:9.3px;color:#fff;letter-spacing:0.692px;-webkit-text-stroke:0.2px #fff;">Clinic consultation</span>
<span class="t" style="left:990.5px;top:687.2px;font-size:11px;color:#fff;letter-spacing:0.674px;-webkit-text-stroke:0.3px #fff;">Book Appointment</span>
<span class="t" style="left:887.3px;top:534.8px;font-size:10.36px;color:#444;letter-spacing:0.000px;">9.15 AM</span>
<span class="t" style="left:984.3px;top:534.8px;font-size:10.36px;color:#444;letter-spacing:0.000px;">9.15 AM</span>
<span class="t" style="left:1080.8px;top:534.8px;font-size:10.36px;color:#444;letter-spacing:0.000px;">9.15 AM</span>
<span class="t" style="left:1177.8px;top:534.8px;font-size:10.36px;color:#444;letter-spacing:0.000px;">9.15 AM</span>
<span class="t" style="left:887.3px;top:570.5px;font-size:10.36px;color:#444;letter-spacing:0.000px;">9.15 AM</span>
<span class="t" style="left:984.3px;top:571.8px;font-size:10.36px;color:#444;letter-spacing:0.000px;">9.15 AM</span>
<span class="t" style="left:1177.8px;top:571.8px;font-size:10.36px;color:#444;letter-spacing:0.000px;">9.15 AM</span>
<span class="t" style="left:887.3px;top:608.8px;font-size:10.36px;color:#444;letter-spacing:0.000px;">9.15 AM</span>
<span class="t" style="left:984.3px;top:608.8px;font-size:10.36px;color:#444;letter-spacing:0.000px;">9.15 AM</span>
</div>
</body>
</html>
